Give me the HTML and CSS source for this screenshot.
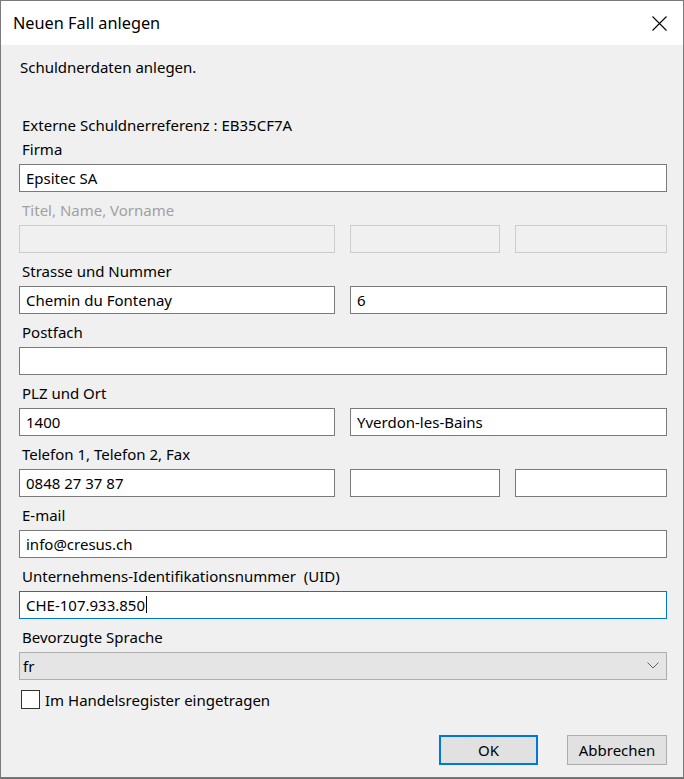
FILE: index.html
```html
<!DOCTYPE html>
<html lang="de">
<head>
    <meta charset="UTF-8">
    <title>Neuen Fall anlegen</title>
    <link rel="stylesheet" href="styles.css">
</head>
<body>
    <div class="dialog">
        <div class="titlebar">
            <span class="title">Neuen Fall anlegen</span>
            <button class="close" aria-label="Schliessen">
                <svg width="15" height="15" viewBox="0 0 15 15">
                    <path d="M0.5 0.5 L14.5 14.5 M14.5 0.5 L0.5 14.5" stroke="#000" stroke-width="1.1" fill="none"/>
                </svg>
            </button>
        </div>

        <div class="content">
            <p class="intro">Schuldnerdaten anlegen.</p>
            <p class="ref">Externe Schuldnerreferenz : EB35CF7A</p>

            <div class="group">
                <div class="label">Firma</div>
                <div class="row">
                    <input class="field span-all" value="Epsitec SA">
                </div>
            </div>

            <div class="group">
                <div class="label disabled">Titel, Name, Vorname</div>
                <div class="row">
                    <input class="field" disabled>
                    <input class="field" disabled>
                    <input class="field" disabled>
                </div>
            </div>

            <div class="group">
                <div class="label">Strasse und Nummer</div>
                <div class="row">
                    <input class="field" value="Chemin du Fontenay">
                    <input class="field span-two" value="6">
                </div>
            </div>

            <div class="group">
                <div class="label">Postfach</div>
                <div class="row">
                    <input class="field span-all">
                </div>
            </div>

            <div class="group">
                <div class="label">PLZ und Ort</div>
                <div class="row">
                    <input class="field" value="1400">
                    <input class="field span-two" value="Yverdon-les-Bains">
                </div>
            </div>

            <div class="group">
                <div class="label">Telefon 1, Telefon 2, Fax</div>
                <div class="row">
                    <input class="field" value="0848 27 37 87">
                    <input class="field">
                    <input class="field">
                </div>
            </div>

            <div class="group">
                <div class="label">E-mail</div>
                <div class="row">
                    <input class="field span-all" value="info@cresus.ch">
                </div>
            </div>

            <div class="group">
                <div class="label">Unternehmens-Identifikationsnummer&nbsp; (UID)</div>
                <div class="row">
                    <div class="field span-all focused">CHE-107.933.850<span class="caret"></span></div>
                </div>
            </div>

            <div class="group">
                <div class="label">Bevorzugte Sprache</div>
                <div class="select">
                    <span>fr</span>
                    <svg width="12" height="7" viewBox="0 0 12 7">
                        <path d="M0.5 0.5 L6 6 L11.5 0.5" stroke="#606060" stroke-width="1" fill="none"/>
                    </svg>
                </div>
            </div>

            <label class="check">
                <span class="box"></span>
                Im Handelsregister eingetragen
            </label>

            <div class="buttons">
                <button class="btn default">OK</button>
                <button class="btn">Abbrechen</button>
            </div>
        </div>
    </div>
</body>
</html>
```

FILE: styles.css
```css
body {
    margin: 0;
    background: #6d6d6d;
    font-family: "Noto Sans", "Open Sans", sans-serif;
    font-size: 15px;
    color: #000;
}

.dialog {
    width: 684px;
    height: 778px;
    box-sizing: border-box;
    border: 1px solid #7a7a7a;
    background: #f0f0f0;
    display: flex;
    flex-direction: column;
}

.titlebar {
    height: 44px;
    flex: none;
    background: #fff;
    display: flex;
    align-items: center;
    justify-content: space-between;
    padding: 0 16px 0 12px;
}

.title {
    font-size: 16.3px;
}

.close {
    border: none;
    background: none;
    padding: 0;
    width: 15px;
    height: 15px;
    display: flex;
}

.content {
    padding: 13px 16px 0 18px;
    display: flex;
    flex-direction: column;
}

.intro,
.ref {
    margin: 0;
    line-height: 18px;
    padding-bottom: 2px;
    padding-left: 1px;
}

.intro {
    margin-bottom: 38px;
}

.ref {
    padding-left: 3px;
    margin-bottom: 4px;
}

.group {
    margin-bottom: 9px;
}

.label {
    line-height: 18px;
    height: 18px;
    padding-bottom: 2px;
    margin-bottom: 4px;
    padding-left: 3px;
}

.label.disabled {
    color: #a0a0a0;
}

.row {
    display: grid;
    grid-template-columns: 316px 150px 1fr;
    column-gap: 15px;
}

.field {
    height: 28px;
    box-sizing: border-box;
    border: 1px solid #7a7a7a;
    background: #fff;
    font: inherit;
    color: #000;
    padding: 0 6px 1px;
    margin: 0;
    outline: none;
    border-radius: 0;
    min-width: 0;
}

.field:disabled {
    background: #f0f0f0;
    border-color: #cccccc;
}

.field.focused {
    border-color: #0078d7;
    display: flex;
    align-items: center;
}

.caret {
    display: inline-block;
    width: 1px;
    height: 17px;
    background: #000;
    margin-left: 1px;
}

.span-all {
    grid-column: 1 / 4;
}

.span-two {
    grid-column: 2 / 4;
}

.select {
    height: 28px;
    box-sizing: border-box;
    border: 1px solid #adadad;
    background: #e5e5e5;
    display: flex;
    align-items: center;
    justify-content: space-between;
    padding: 0 7px 1px 3px;
}

.check {
    display: flex;
    align-items: center;
    gap: 5px;
    margin-top: 1px;
    padding-left: 2px;
    height: 19px;
}

.box {
    width: 19px;
    height: 19px;
    box-sizing: border-box;
    border: 1px solid #333;
    background: #fff;
}

.buttons {
    display: flex;
    justify-content: flex-end;
    gap: 29px;
    margin-top: 26px;
}

.btn {
    height: 30px;
    box-sizing: border-box;
    border: 1px solid #adadad;
    background: #e1e1e1;
    font: inherit;
    color: #000;
    padding: 0;
    width: 100px;
}

.btn.default {
    border: 2px solid #0078d7;
    width: 99px;
}
```
